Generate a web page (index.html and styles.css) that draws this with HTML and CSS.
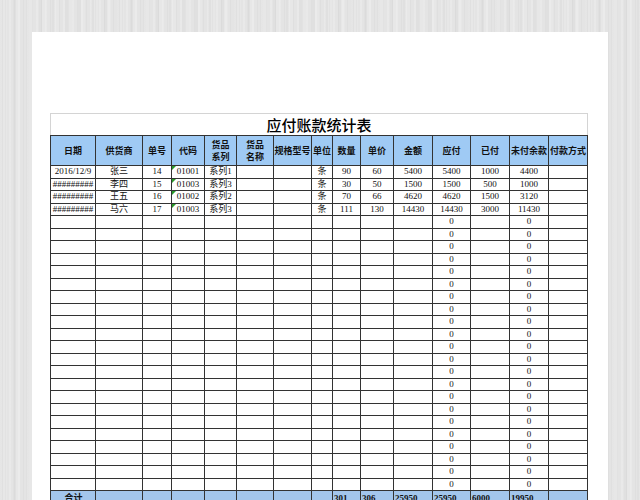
FILE: index.html
```html
<!DOCTYPE html>
<html lang="zh">
<head>
<meta charset="utf-8">
<title>应付账款统计表</title>
<link rel="stylesheet" href="styles.css">
</head>
<body>
<div class="paper">
<table class="sheet">
<colgroup>
<col class="c1"><col class="c2"><col class="c3"><col class="c4"><col class="c5"><col class="c6"><col class="c7"><col class="c8"><col class="c9"><col class="c10"><col class="c11"><col class="c12"><col class="c13"><col class="c14"><col class="c15">
</colgroup>
<tr class="title"><td colspan="15">应付账款统计表</td></tr>
<tr class="head">
<td>日期</td><td>供货商</td><td>单号</td><td>代码</td><td>货品<br>系列</td><td>货品<br>名称</td><td>规格型号</td><td>单位</td><td>数量</td><td>单价</td><td>金额</td><td>应付</td><td>已付</td><td>未付余款</td><td>付款方式</td>
</tr>
<tr class="r"><td>2016/12/9</td><td>张三</td><td>14</td><td class="code">01001</td><td>系列1</td><td></td><td></td><td>条</td><td>90</td><td>60</td><td>5400</td><td>5400</td><td>1000</td><td>4400</td><td></td></tr>
<tr class="r"><td>#########</td><td>李四</td><td>15</td><td class="code">01003</td><td>系列3</td><td></td><td></td><td>条</td><td>30</td><td>50</td><td>1500</td><td>1500</td><td>500</td><td>1000</td><td></td></tr>
<tr class="r"><td>#########</td><td>王五</td><td>16</td><td class="code">01002</td><td>系列2</td><td></td><td></td><td>条</td><td>70</td><td>66</td><td>4620</td><td>4620</td><td>1500</td><td>3120</td><td></td></tr>
<tr class="r"><td>#########</td><td>马六</td><td>17</td><td class="code">01003</td><td>系列3</td><td></td><td></td><td>条</td><td>111</td><td>130</td><td>14430</td><td>14430</td><td>3000</td><td>11430</td><td></td></tr>
<!-- 1 -->
<tr class="r"><td></td><td></td><td></td><td></td><td></td><td></td><td></td><td></td><td></td><td></td><td></td><td>0</td><td></td><td>0</td><td></td></tr>
<!-- 2 -->
<tr class="r"><td></td><td></td><td></td><td></td><td></td><td></td><td></td><td></td><td></td><td></td><td></td><td>0</td><td></td><td>0</td><td></td></tr>
<!-- 3 -->
<tr class="r"><td></td><td></td><td></td><td></td><td></td><td></td><td></td><td></td><td></td><td></td><td></td><td>0</td><td></td><td>0</td><td></td></tr>
<!-- 4 -->
<tr class="r"><td></td><td></td><td></td><td></td><td></td><td></td><td></td><td></td><td></td><td></td><td></td><td>0</td><td></td><td>0</td><td></td></tr>
<!-- 5 -->
<tr class="r"><td></td><td></td><td></td><td></td><td></td><td></td><td></td><td></td><td></td><td></td><td></td><td>0</td><td></td><td>0</td><td></td></tr>
<!-- 6 -->
<tr class="r"><td></td><td></td><td></td><td></td><td></td><td></td><td></td><td></td><td></td><td></td><td></td><td>0</td><td></td><td>0</td><td></td></tr>
<!-- 7 -->
<tr class="r"><td></td><td></td><td></td><td></td><td></td><td></td><td></td><td></td><td></td><td></td><td></td><td>0</td><td></td><td>0</td><td></td></tr>
<!-- 8 -->
<tr class="r"><td></td><td></td><td></td><td></td><td></td><td></td><td></td><td></td><td></td><td></td><td></td><td>0</td><td></td><td>0</td><td></td></tr>
<!-- 9 -->
<tr class="r"><td></td><td></td><td></td><td></td><td></td><td></td><td></td><td></td><td></td><td></td><td></td><td>0</td><td></td><td>0</td><td></td></tr>
<!-- 10 -->
<tr class="r"><td></td><td></td><td></td><td></td><td></td><td></td><td></td><td></td><td></td><td></td><td></td><td>0</td><td></td><td>0</td><td></td></tr>
<!-- 11 -->
<tr class="r"><td></td><td></td><td></td><td></td><td></td><td></td><td></td><td></td><td></td><td></td><td></td><td>0</td><td></td><td>0</td><td></td></tr>
<!-- 12 -->
<tr class="r"><td></td><td></td><td></td><td></td><td></td><td></td><td></td><td></td><td></td><td></td><td></td><td>0</td><td></td><td>0</td><td></td></tr>
<!-- 13 -->
<tr class="r"><td></td><td></td><td></td><td></td><td></td><td></td><td></td><td></td><td></td><td></td><td></td><td>0</td><td></td><td>0</td><td></td></tr>
<!-- 14 -->
<tr class="r"><td></td><td></td><td></td><td></td><td></td><td></td><td></td><td></td><td></td><td></td><td></td><td>0</td><td></td><td>0</td><td></td></tr>
<!-- 15 -->
<tr class="r"><td></td><td></td><td></td><td></td><td></td><td></td><td></td><td></td><td></td><td></td><td></td><td>0</td><td></td><td>0</td><td></td></tr>
<!-- 16 -->
<tr class="r"><td></td><td></td><td></td><td></td><td></td><td></td><td></td><td></td><td></td><td></td><td></td><td>0</td><td></td><td>0</td><td></td></tr>
<!-- 17 -->
<tr class="r"><td></td><td></td><td></td><td></td><td></td><td></td><td></td><td></td><td></td><td></td><td></td><td>0</td><td></td><td>0</td><td></td></tr>
<!-- 18 -->
<tr class="r"><td></td><td></td><td></td><td></td><td></td><td></td><td></td><td></td><td></td><td></td><td></td><td>0</td><td></td><td>0</td><td></td></tr>
<!-- 19 -->
<tr class="r"><td></td><td></td><td></td><td></td><td></td><td></td><td></td><td></td><td></td><td></td><td></td><td>0</td><td></td><td>0</td><td></td></tr>
<!-- 20 -->
<tr class="r"><td></td><td></td><td></td><td></td><td></td><td></td><td></td><td></td><td></td><td></td><td></td><td>0</td><td></td><td>0</td><td></td></tr>
<!-- 21 -->
<tr class="r"><td></td><td></td><td></td><td></td><td></td><td></td><td></td><td></td><td></td><td></td><td></td><td>0</td><td></td><td>0</td><td></td></tr>
<!-- 22 -->
<tr class="r"><td></td><td></td><td></td><td></td><td></td><td></td><td></td><td></td><td></td><td></td><td></td><td>0</td><td></td><td>0</td><td></td></tr>
<tr class="total"><td class="mid">合计</td><td></td><td></td><td></td><td></td><td></td><td></td><td></td><td>301</td><td>306</td><td>25950</td><td>25950</td><td>6000</td><td>19950</td><td></td></tr>
</table>
</div>
</body>
</html>
```

FILE: styles.css
```css
html, body {
  margin: 0;
  padding: 0;
  height: 500px;
  overflow: hidden;
}
body {
  background-color: #e4e4e4;
  background-image:
    repeating-linear-gradient(90deg, rgba(255,255,255,0.18) 0 2px, rgba(0,0,0,0) 2px 5px, rgba(0,0,0,0.025) 5px 6px, rgba(0,0,0,0) 6px 9px),
    repeating-linear-gradient(90deg, rgba(0,0,0,0.02) 0 3px, rgba(255,255,255,0.12) 3px 7px, rgba(0,0,0,0) 7px 13px);
  padding: 32px 0 0 32px;
  box-sizing: border-box;
  font-family: "Liberation Serif", "Noto Sans CJK SC", serif;
}
.paper {
  width: 576px;
  height: 480px;
  background: #ffffff;
  padding: 81px 0 0 18px;
  box-sizing: border-box;
}
.sheet {
  border-collapse: collapse;
  table-layout: fixed;
  width: 538px;
  font-size: 9px;
  color: #111;
}
.c1 { width: 45px; }
.c2 { width: 47px; }
.c3 { width: 29px; }
.c4 { width: 33px; }
.c5 { width: 32px; }
.c6 { width: 37px; }
.c7 { width: 38px; }
.c8 { width: 21px; }
.c9 { width: 28px; }
.c10 { width: 33px; }
.c11 { width: 39px; }
.c12 { width: 38px; }
.c13 { width: 39px; }
.c14 { width: 39px; }
.c15 { width: 39px; }
.sheet td {
  border: 1px solid #333;
  padding: 0;
  text-align: center;
  white-space: nowrap;
  overflow: hidden;
}
.title td {
  border: 1px solid #d4d4d4;
  border-bottom-color: #333;
  height: 21px;
  font-family: "Noto Sans CJK SC", sans-serif;
  font-size: 15px;
  font-weight: 500;
  line-height: 21px;
  color: #000;
}
.head td {
  background: #9fcaf4;
  height: 29px;
  font-family: "Noto Sans CJK SC", sans-serif;
  font-weight: bold;
  font-size: 9px;
  line-height: 12px;
  color: #111;
}
.r td {
  height: 11.5px;
  line-height: 11px;
  font-size: 9px;
}
.code {
  position: relative;
}
.code::before {
  content: "";
  position: absolute;
  left: 0;
  top: 0;
  border-top: 4px solid #2a9a2a;
  border-right: 4px solid transparent;
}
.total td {
  background: #a3c6ec;
  height: 14px;
  line-height: 14px;
  font-weight: bold;
  text-align: left;
  padding-left: 1px;
  vertical-align: top;
}
.total td.mid {
  text-align: center;
  font-family: "Noto Sans CJK SC", sans-serif;
}
```
